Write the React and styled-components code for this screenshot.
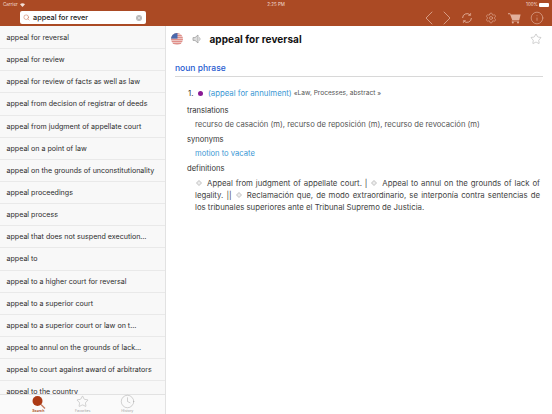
import React from 'react';
import styled, { createGlobalStyle } from 'styled-components';
import { ChevronLeft, ChevronRight, Settings, Info, Search, Star, Clock, X } from 'lucide-react';

const Global = createGlobalStyle`
  html, body { margin: 0; padding: 0; width: 552px; height: 414px; overflow: hidden; background: #fff; }
  * { box-sizing: border-box; }
  body { font-family: Inter, "Open Sans", "Liberation Sans", sans-serif; -webkit-font-smoothing: antialiased; }
`;
const Page = styled.div`width:552px;height:414px;display:flex;flex-direction:column;overflow:hidden;`;
const Header = styled.header`height:26px;background:#ab4a24;color:#fff;display:flex;flex-direction:column;flex:none;`;
const StatusBar = styled.div`height:9px;padding:0 3px;display:grid;grid-template-columns:1fr auto 1fr;align-items:center;font-size:4.5px;line-height:9px;color:#f3dfd6;`;
const StatusLeft = styled.div`display:flex;align-items:center;gap:2px;`;
const StatusRight = styled.div`display:flex;align-items:center;justify-content:flex-end;gap:1px;`;
const Battery = styled.span`width:10px;height:4px;background:#fff;border-radius:1px;`;
const ToolRow = styled.div`height:17px;display:flex;align-items:center;`;
const SearchBox = styled.div`width:126px;height:13px;margin-left:20px;background:#fff;border-radius:2px;display:flex;align-items:center;padding:0 2px 0 3px;gap:3px;color:#222;font-size:7.3px;`;
const SearchText = styled.span`flex:1;font-weight:500;`;
const ClearDot = styled.span`width:6px;height:6px;border-radius:50%;background:#b9b9b9;display:flex;align-items:center;justify-content:center;color:#fff;margin-right:2px;`;
const Tools = styled.div`margin-left:auto;display:flex;align-items:center;color:#e2b09c;`;
const ToolSlot = styled.span`width:${p=>p.$w}px;display:flex;justify-content:center;svg{flex:none;}`;
const Body = styled.div`flex:1;display:flex;min-height:0;`;
const Sidebar = styled.aside`width:166px;flex:none;background:#f8f8f8;border-right:1px solid #e2e2e2;display:flex;flex-direction:column;min-height:0;`;
const List = styled.div`flex:1;overflow:hidden;min-height:0;padding-top:1px;`;
const Row = styled.div`height:22.15px;line-height:21px;padding-left:6.5px;font-size:7.1px;font-weight:400;color:#2b2b2b;border-bottom:1px solid #e9e9e9;white-space:nowrap;overflow:hidden;`;
const TabBar = styled.nav`height:20px;flex:none;background:#fafafa;border-top:1px solid #e2e2e2;display:flex;padding-left:16px;`;
const Tab = styled.div`width:44.5px;display:flex;flex-direction:column;align-items:center;font-size:3.6px;line-height:4px;color:${p=>p.$active?'#ab4a24':'#a0a0a0'};font-weight:${p=>p.$active?600:400};`;
const TabIcon = styled.span`height:13.5px;display:flex;align-items:center;position:relative;`;
const Main = styled.main`flex:1;min-width:0;background:#fff;display:flex;flex-direction:column;padding:0 9px 0 9px;`;
const TitleRow = styled.div`height:25px;display:flex;align-items:center;margin-left:-4px;`;
const Title = styled.h1`margin:0 0 0 7.5px;font-size:10px;font-weight:700;color:#111;letter-spacing:.05px;`;
const Speaker = styled.span`margin-left:9px;display:flex;color:#a0a0a0;`;
const StarSlot = styled.span`margin-left:auto;margin-right:1px;display:flex;color:#8d8d8d;`;
const Pos = styled.div`margin-top:12px;height:11px;font-size:8.5px;font-weight:500;line-height:11px;color:#1f5bd0;`;
const Rule = styled.div`margin-top:2px;height:1px;background:#d8d8d8;`;
const Sense = styled.div`margin:11px 0 0 13px;display:flex;align-items:center;font-size:7.8px;line-height:11px;color:#333;`;
const Dot = styled.span`width:5px;height:5px;border-radius:50%;background:#8a1a94;margin:0 4.5px 0 5px;flex:none;`;
const LinkText = styled.span`color:#3a97d4;font-size:${p=>p.$s||7.8}px;`;
const Note = styled.span`font-size:6.6px;color:#555;margin-left:2px;`;
const Label = styled.div`margin:${p=>p.$m}px 0 0 12px;font-size:7.6px;line-height:11px;color:#333;`;
const Indent = styled.div`margin:3px 0 0 20px;font-size:7.65px;line-height:11px;color:#555;`;
const Para = styled.div`margin:2.5px 3px 0 20px;font-size:7.8px;line-height:12px;color:#444;text-align:justify;`;
const DiamondIcon = styled.svg`display:inline-block;width:6px;height:6px;vertical-align:-0.5px;margin:0 5px 0 1px;`;

const Diamond = () => (
  <DiamondIcon viewBox="0 0 12 12"><path d="M6 1 11 6 6 11 1 6z" fill="#ececec" stroke="#b4b4b4" strokeWidth="1.6"/></DiamondIcon>
);

const words = ['appeal for reversal','appeal for review','appeal for review of facts as well as law','appeal from decision of registrar of deeds','appeal from judgment of appellate court','appeal on a point of law','appeal on the grounds of unconstitutionality','appeal proceedings','appeal process','appeal that does not suspend execution…','appeal to','appeal to a higher court for reversal','appeal to a superior court','appeal to a superior court or law on t…','appeal to annul on the grounds of lack…','appeal to court against award of arbitrators','appeal to the country'];

const Flag = () => (
  <svg width="12" height="12" viewBox="0 0 12 12" style={{flex:'none'}}>
    <defs><clipPath id="c"><circle cx="6" cy="6" r="6"/></clipPath></defs>
    <g clipPath="url(#c)">
      <rect width="12" height="12" fill="#f4f0ee"/>
      {[0,2,4,6,8,10].map(y=><rect key={y} y={y+.3} width="12" height="1" fill="#d9655f"/>)}
      <rect width="6.5" height="5.6" fill="#4a69ad"/>
    </g>
  </svg>
);
const SpeakerIcon = () => (
  <svg width="10" height="10" viewBox="0 0 10 10" fill="none" stroke="currentColor" strokeWidth=".8">
    <path d="M1 3.6h2L6 1v8L3 6.4H1z" fill="#dedede"/>
    <path d="M7.4 3.4a2.4 2.4 0 0 1 0 3.2"/>
  </svg>
);
const Refresh = () => (
  <svg width="12" height="12" viewBox="0 0 12 12" fill="none" stroke="currentColor" strokeWidth=".9">
    <path d="M1.6 6a4.4 4.4 0 0 1 7.6-3M10.4 6a4.4 4.4 0 0 1-7.6 3"/>
    <path d="M9.6 1v2.4H7.2M2.4 11V8.6h2.4" strokeWidth=".7"/>
  </svg>
);
const Cart = () => (
  <svg width="13" height="12" viewBox="0 0 13 12">
    <path d="M0 1.2h2.2l.5 1.3H12.6l-1.3 5.4H4.2L2 2.2H0z" fill="currentColor"/>
    <path d="M3.6 9h7.6" stroke="currentColor" strokeWidth=".8"/>
    <circle cx="4.8" cy="10.6" r="1" fill="currentColor"/><circle cx="10" cy="10.6" r="1" fill="currentColor"/>
  </svg>
);

export default function App() {
  return (
    <Page>
      <Global/>
      <Header>
        <StatusBar>
          <StatusLeft>Carrier <svg width="5" height="4" viewBox="0 0 10 8"><path d="M5 8 0 2.5C3-.5 7-.5 10 2.5z" fill="#f3dfd6"/></svg></StatusLeft>
          <span>2:25 PM</span>
          <StatusRight>100% <Battery/></StatusRight>
        </StatusBar>
        <ToolRow>
          <SearchBox>
            <Search size={7} color="#c0603c" strokeWidth={1.6}/>
            <SearchText>appeal for rever</SearchText>
            <ClearDot><X size={4} strokeWidth={3}/></ClearDot>
          </SearchBox>
          <Tools>
            <ToolSlot $w={18}><ChevronLeft size={24} strokeWidth={.8}/></ToolSlot>
            <ToolSlot $w={18}><ChevronRight size={24} strokeWidth={.8}/></ToolSlot>
            <ToolSlot $w={22}><Refresh/></ToolSlot>
            <ToolSlot $w={26}><Settings size={12} strokeWidth={1.2}/></ToolSlot>
            <ToolSlot $w={21}><Cart/></ToolSlot>
            <ToolSlot $w={24}><Info size={14} strokeWidth={1.1}/></ToolSlot>
            <ToolSlot $w={3}/>
          </Tools>
        </ToolRow>
      </Header>
      <Body>
        <Sidebar>
          <List>{words.map(w=><Row key={w}>{w}</Row>)}</List>
          <TabBar>
            <Tab $active><TabIcon><svg width="16" height="14" viewBox="0 0 16 14"><circle cx="7.5" cy="6" r="5" fill="#ab3a14"/><path d="m11 9.5 4 4" stroke="#c47a5c" strokeWidth="1.2"/></svg></TabIcon>Search</Tab>
            <Tab><TabIcon><Star size={13} strokeWidth={.8} color="#9a9a9a"/></TabIcon>Favorites</Tab>
            <Tab><TabIcon><Clock size={15} strokeWidth={.7} color="#9a9a9a"/></TabIcon>History</Tab>
          </TabBar>
        </Sidebar>
        <Main>
          <TitleRow>
            <Flag/>
            <Speaker><SpeakerIcon/></Speaker>
            <Title>appeal for reversal</Title>
            <StarSlot><Star size={12} strokeWidth={.8}/></StarSlot>
          </TitleRow>
          <Pos>noun phrase</Pos>
          <Rule/>
          <Sense>1.<Dot/><LinkText>(appeal for annulment)</LinkText><Note>«Law, Processes, abstract »</Note></Sense>
          <Label $m={6}>translations</Label>
          <Indent>recurso de casación (m), recurso de reposición (m), recurso de revocación (m)</Indent>
          <Label $m={4}>synonyms</Label>
          <Indent><LinkText $s={7.6}>motion to vacate</LinkText></Indent>
          <Label $m={4}>definitions</Label>
          <Para><Diamond/>Appeal from judgment of appellate court. | <Diamond/>Appeal to annul on the grounds of lack of legality. || <Diamond/>Reclamación que, de modo extraordinario, se interponía contra sentencias de los tribunales superiores ante el Tribunal Supremo de Justicia.</Para>
        </Main>
      </Body>
    </Page>
  );
}
